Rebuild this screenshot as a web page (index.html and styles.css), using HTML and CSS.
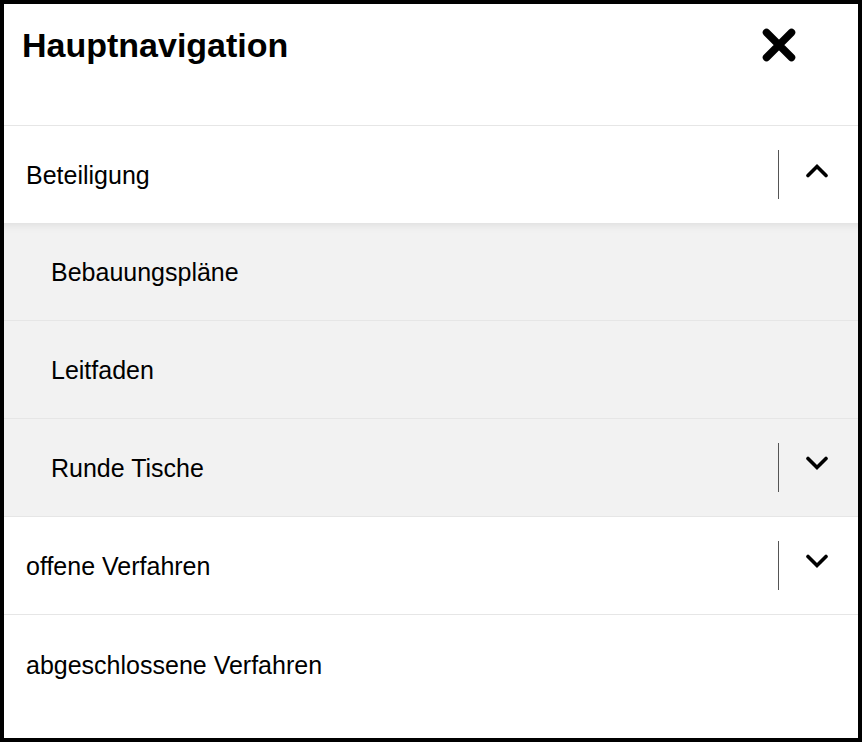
FILE: index.html
```html
<!DOCTYPE html>
<html lang="de">
<head>
  <meta charset="UTF-8" />
  <meta name="viewport" content="width=device-width, initial-scale=1.0"/>
  <title>Hauptnavigation</title>
  <link rel="stylesheet" href="styles.css">
</head>
<body>
  <nav class="menu">
    <header class="menu-head">
      <h2>Hauptnavigation</h2>
      <button class="close-btn" aria-label="Schließen">
        <svg width="34" height="34" viewBox="0 0 34 34"><path d="M4.5 4.5 L29.5 29.5 M29.5 4.5 L4.5 29.5" /></svg>
      </button>
    </header>

    <ul class="nav-list">
      <li class="nav-item open">
        <div class="nav-row">
          <a href="#">Beteiligung</a>
          <button class="toggle" aria-label="Zuklappen">
            <svg width="24" height="15" viewBox="0 0 24 15"><polyline points="3,12.5 12,3.5 21,12.5" /></svg>
          </button>
        </div>
        <ul class="sub-list">
          <li class="nav-row"><a href="#">Bebauungspläne</a></li>
          <li class="nav-row"><a href="#">Leitfaden</a></li>
          <li class="nav-row">
            <a href="#">Runde Tische</a>
            <button class="toggle" aria-label="Aufklappen">
              <svg width="24" height="15" viewBox="0 0 24 15"><polyline points="3,2.5 12,11.5 21,2.5" /></svg>
            </button>
          </li>
        </ul>
      </li>
      <li class="nav-item">
        <div class="nav-row">
          <a href="#">offene Verfahren</a>
          <button class="toggle" aria-label="Aufklappen">
            <svg width="24" height="15" viewBox="0 0 24 15"><polyline points="3,2.5 12,11.5 21,2.5" /></svg>
          </button>
        </div>
      </li>
      <li class="nav-item last">
        <div class="nav-row"><a href="#">abgeschlossene Verfahren</a></div>
      </li>
    </ul>
  </nav>
</body>
</html>
```

FILE: styles.css
```css
:root {
  --text: #000;
  --line: #e6e6e6;
  --sub-bg: #f2f2f2;
  --sep: #555;
}
*, *::before, *::after { box-sizing: border-box; margin: 0; padding: 0; }
html, body { height: 100%; }
body { font-family: "Liberation Sans", Arial, sans-serif; color: var(--text); background: #fff; }

.menu { height: 100%; border: 4px solid #000; background: #fff; overflow: hidden; }

.menu-head { display: flex; justify-content: space-between; align-items: flex-start; height: 122px; padding: 22px 0 0 18px; border-bottom: 1px solid var(--line); }
.menu-head h2 { font-size: 34px; font-weight: bold; line-height: 39px; }
.close-btn { background: none; border: none; cursor: pointer; margin: 2px 62px 0 0; display: flex; }
.close-btn path { stroke: #000; stroke-width: 7.5; stroke-linecap: round; fill: none; }

.nav-list, .sub-list { list-style: none; }

.nav-row { display: flex; align-items: center; justify-content: space-between; height: 98px; border-bottom: 1px solid var(--line); }
.nav-row a { color: var(--text); text-decoration: none; font-size: 25px; line-height: 30px; padding: 1px 0 0 22px; }
.nav-item.open > .nav-row { border-bottom: none; height: 97px; }
.nav-item.last .nav-row { border-bottom: none; }

.sub-list { background: var(--sub-bg); box-shadow: inset 0 12px 10px -10px rgba(0,0,0,0.09); }
.sub-list .nav-row a { padding-left: 47px; }

.toggle { display: flex; align-items: center; justify-content: center; width: 80px; height: 49px; border: none; border-left: 1px solid var(--sep); background: none; cursor: pointer; }
.toggle svg { margin: 0 3px 8px 0; }
.toggle polyline { fill: none; stroke: #000; stroke-width: 3.6; stroke-linecap: round; stroke-linejoin: miter; }
```
